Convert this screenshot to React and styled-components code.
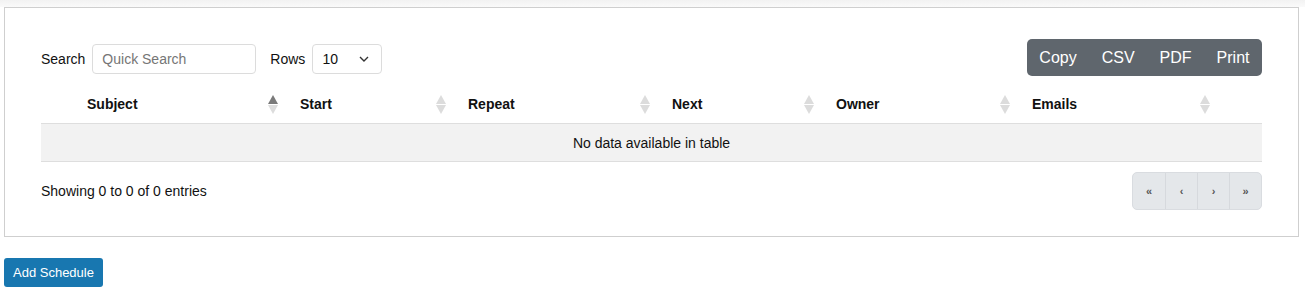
import React from "react"
import styled, { createGlobalStyle } from "styled-components"

const GlobalStyle = createGlobalStyle`
  html, body {
    margin: 0;
    padding: 0;
    background: #fff;
    font-family: "Liberation Sans", Arial, sans-serif;
    color: #111;
  }
`

const Page = styled.div`
  padding: 7px 6px 0 4px;
  background: linear-gradient(#f2f2f2 0, #fafafa 7px, #fff 7px);
`

const Panel = styled.div`
  border: 1px solid #cfcfcf;
  background: #fff;
  padding: 32px 36px 26px 36px;
`

const Toolbar = styled.div`
  display: flex;
  align-items: center;
  justify-content: space-between;
  height: 37px;
`

const Controls = styled.div`
  display: flex;
  align-items: center;
  font-size: 14px;
`

const Label = styled.span`
  margin-right: 7px;
`

const SearchInput = styled.input`
  box-sizing: border-box;
  width: 164px;
  height: 30px;
  border: 1px solid #dcdcdc;
  border-radius: 4px;
  padding: 0 9px;
  font-family: inherit;
  font-size: 14px;
  margin-right: 14px;
  &::placeholder {
    color: #767676;
  }
`

const Select = styled.div`
  box-sizing: border-box;
  width: 70px;
  height: 30px;
  border: 1px solid #dcdcdc;
  border-radius: 4px;
  padding: 0 11px 0 9px;
  display: flex;
  align-items: center;
  justify-content: space-between;
  font-size: 14px;
`

const ButtonGroup = styled.div`
  display: flex;
  background: #5f666d;
  border-radius: 5px;
  margin-top: -3px;
`

const GroupButton = styled.button`
  background: transparent;
  border: none;
  color: #fff;
  font-family: inherit;
  font-size: 16px;
  line-height: 19px;
  padding: 9px 12.5px;
`

const Table = styled.div`
  margin-top: 8px;
`

const COLS = "29px 213px 168px 204px 164px 196px 200px 47px"

const HeadRow = styled.div`
  display: grid;
  grid-template-columns: ${COLS};
  height: 38px;
  border-bottom: 1px solid #dedede;
`

const HeadCell = styled.div`
  display: flex;
  align-items: center;
  justify-content: space-between;
  padding: 0 5px 0 17px;
  font-size: 14px;
  font-weight: bold;
  &:first-child {
    padding-left: 0;
  }
`

const Sort = styled.span`
  display: inline-flex;
  flex-direction: column;
  align-items: center;
  gap: 1px;
`

const Tri = styled.span`
  width: 0;
  height: 0;
  border-left: 5px solid transparent;
  border-right: 5px solid transparent;
  ${(p) =>
    p.$down
      ? `border-top: 9px solid ${p.$color};`
      : `border-bottom: 9px solid ${p.$color};`}
`

const EmptyRow = styled.div`
  height: 37px;
  background: #f2f2f2;
  border-bottom: 1px solid #dedede;
  display: flex;
  align-items: center;
  justify-content: center;
  font-size: 14px;
`

const Footer = styled.div`
  display: flex;
  align-items: center;
  justify-content: space-between;
  margin-top: 10px;
  font-size: 14px;
`

const Pager = styled.div`
  display: flex;
  background: #e4e7ea;
  border: 1px solid #d9dce0;
  border-radius: 5px;
  overflow: hidden;
`

const PageButton = styled.button`
  width: 32px;
  height: 36px;
  border: none;
  border-left: 1px solid #d6d9dd;
  background: transparent;
  color: #555;
  font-family: inherit;
  font-size: 11px;
  font-weight: bold;
  padding: 0;
  &:first-child {
    border-left: none;
  }
`

const AddButton = styled.button`
  margin: 21px 0 0 4px;
  background: #1877b0;
  color: #fff;
  border: none;
  border-radius: 3px;
  font-family: inherit;
  font-size: 13px;
  height: 29px;
  padding: 0 9px;
`

const columns = [
  { title: "", sort: null },
  { title: "Subject", sort: "asc" },
  { title: "Start", sort: "none" },
  { title: "Repeat", sort: "none" },
  { title: "Next", sort: "none" },
  { title: "Owner", sort: "none" },
  { title: "Emails", sort: "none" },
  { title: "", sort: null },
]

function SortIcon({ dir }) {
  return (
    <Sort>
      <Tri $color={dir === "asc" ? "#7a7a7a" : "#dcdcdc"} />
      <Tri $down $color="#dcdcdc" />
    </Sort>
  )
}

function Chevron() {
  return (
    <svg width="12" height="8" viewBox="0 0 12 8">
      <path d="M2 2l4 4 4-4" fill="none" stroke="#333" strokeWidth="1.4" />
    </svg>
  )
}

export default function App() {
  return (
    <>
      <GlobalStyle />
      <Page>
        <Panel>
          <Toolbar>
            <Controls>
              <Label>Search</Label>
              <SearchInput placeholder="Quick Search" />
              <Label>Rows</Label>
              <Select>
                <span>10</span>
                <Chevron />
              </Select>
            </Controls>
            <ButtonGroup>
              <GroupButton>Copy</GroupButton>
              <GroupButton>CSV</GroupButton>
              <GroupButton>PDF</GroupButton>
              <GroupButton>Print</GroupButton>
            </ButtonGroup>
          </Toolbar>
          <Table>
            <HeadRow>
              {columns.map((c, i) => (
                <HeadCell key={i}>
                  <span>{c.title}</span>
                  {c.sort && <SortIcon dir={c.sort} />}
                </HeadCell>
              ))}
            </HeadRow>
            <EmptyRow>No data available in table</EmptyRow>
          </Table>
          <Footer>
            <span>Showing 0 to 0 of 0 entries</span>
            <Pager>
              <PageButton>«</PageButton>
              <PageButton>‹</PageButton>
              <PageButton>›</PageButton>
              <PageButton>»</PageButton>
            </Pager>
          </Footer>
        </Panel>
      </Page>
      <AddButton>Add Schedule</AddButton>
    </>
  )
}
